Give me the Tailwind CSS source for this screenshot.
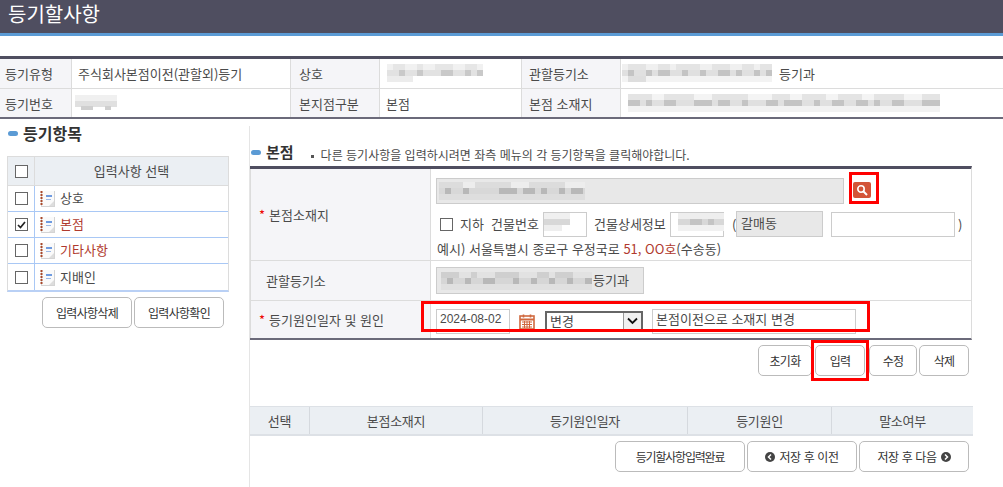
<!DOCTYPE html>
<html lang="ko">
<head>
<meta charset="utf-8">
<script src="https://cdn.jsdelivr.net/npm/@tailwindcss/browser@4"></script>
</head>
<body class="bg-white">
<div class="relative w-[1003px] h-[487px] overflow-hidden bg-white text-[#4a4a4a] text-[13px] leading-none font-['Noto_Sans_CJK_KR','Liberation_Sans',sans-serif]">

  <header class="h-[36px] bg-[#4f4e60] border-b-[3px] border-[#5b9bd5] pl-2 text-white text-[20px] leading-[28px]">등기할사항</header>

  <section class="mt-[20px] border-t-[3px] border-b-2 border-t-[#4f4e60] border-b-[#6b6a7a] grid grid-cols-[72px_219px_89px_142px_99px_1fr] grid-rows-[30px_28px] h-[63px]">
    <div class="bg-[#f5f5f8] border-r border-b border-[#dcdcdc] pl-[5px] flex items-center">등기유형</div>
    <div class="border-b border-r border-[#dcdcdc] pl-[6px] flex items-center">주식회사본점이전(관할외)등기</div>
    <div class="bg-[#f5f5f8] border-r border-b border-[#dcdcdc] pl-[8px] flex items-center">상호</div>
    <div class="border-b border-r border-[#dcdcdc] pl-[7px] flex items-center">
      <svg width="97" height="19"><path d="M0 3H96" stroke="#f1f1f1" stroke-width="6"/><path d="M0 9H96" stroke="#e2e2e2" stroke-width="6"/><path d="M0 15H26" stroke="#ececec" stroke-width="6"/><path d="M12 9H96" stroke="#c9c9c9" stroke-width="6" stroke-dasharray="6 12 6 18 12 12 6 6"/><path d="M6 3H96" stroke="#e6e6e6" stroke-width="6" stroke-dasharray="12 12 6 12 18"/></svg>
    </div>
    <div class="bg-[#f5f5f8] border-r border-b border-[#dcdcdc] pl-[7px] flex items-center">관할등기소</div>
    <div class="border-b border-[#dcdcdc] pl-[1px] flex items-center">
      <svg width="157" height="19"><path d="M0 3H150" stroke="#f0f0f0" stroke-width="6"/><path d="M0 9H150" stroke="#e0e0e0" stroke-width="6"/><path d="M0 15H150" stroke="#f3f3f3" stroke-width="6"/><path d="M6 9H150" stroke="#c4c4c4" stroke-width="6" stroke-dasharray="6 12 6 6 12 12 6 12 6 12 12 6"/><path d="M6 3H150" stroke="#e4e4e4" stroke-width="6" stroke-dasharray="18 12 12 6 24 12"/><path d="M6 15H24" stroke="#dedede" stroke-width="6"/></svg>
      <span>등기과</span>
    </div>
    <div class="bg-[#f5f5f8] border-r border-[#dcdcdc] pl-[5px] flex items-center">등기번호</div>
    <div class="border-r border-[#dcdcdc] pl-[3px] flex items-center">
      <svg width="42" height="16"><path d="M0 3H42" stroke="#f0f0f0" stroke-width="6"/><path d="M0 9H42" stroke="#e0e0e0" stroke-width="6"/><path d="M6 13H36" stroke="#cfcfcf" stroke-width="4" stroke-dasharray="12 12 6"/></svg>
    </div>
    <div class="bg-[#f5f5f8] border-r border-[#dcdcdc] pl-[8px] flex items-center">본지점구분</div>
    <div class="border-r border-[#dcdcdc] pl-[6px] flex items-center">본점</div>
    <div class="bg-[#f5f5f8] border-r border-[#dcdcdc] pl-[7px] flex items-center">본점 소재지</div>
    <div class="pl-[7px] flex items-center">
      <svg width="312" height="19"><path d="M0 3H312" stroke="#f4f4f4" stroke-width="6"/><path d="M0 9H312" stroke="#e0e0e0" stroke-width="6"/><path d="M0 15H312" stroke="#f2f2f2" stroke-width="6"/><path d="M0 9H312" stroke="#c4c4c4" stroke-width="6" stroke-dasharray="12 6 6 12 12 18 18 6 12 12 6 18 12 6 18 12 6 12 12 12"/><path d="M0 3H312" stroke="#e4e4e4" stroke-width="6" stroke-dasharray="24 12 30 18 36 24 18 12 24 12"/></svg>
    </div>
  </section>

  <main class="flex mt-[7px]">
    <aside class="w-[250px] h-[361px] border-r border-[#e5e5e5] pl-[7px] pr-[20px]">
      <h2 class="flex items-center gap-[5px] h-[14px] pl-[1px] text-[16px] font-bold text-[#333]">
        <span class="w-[10px] h-[5px] rounded-full bg-[#5b9bd5]"></span>등기항목
      </h2>
      <div class="mt-[16px] w-[222px] border border-b-2 border-[#dcdcdc] border-b-[#b9d0f5]">
        <div class="flex h-[29px] bg-[#ebeff3] border-b border-[#dcdcdc]">
          <div class="w-[27px] border-r border-[#dcdcdc] flex items-center justify-center"><span class="block size-[13px] border-[1.5px] border-[#666] bg-white"></span></div>
          <div class="flex-1 flex items-center justify-center pb-[2px]">입력사항 선택</div>
        </div>
        <div class="flex h-[26px] border-b border-[#a9c8f5]">
          <div class="w-[27px] border-r border-[#a9c8f5] flex items-center justify-center"><span class="block size-[13px] border-[1.5px] border-[#666] bg-white"></span></div>
          <div class="flex-1 flex items-center gap-[5px] pl-[5px]">
            <svg width="15" height="17" viewBox="0 0 15 17"><rect x="1" y="1" width="14" height="16" fill="#d4d4d4"/><rect x="2" y="1" width="12" height="15" fill="#fafafa"/><path d="M14 11L9 16H14Z" fill="#ddd"/><path d="M1.5 1V16" stroke="#a8482a" stroke-width="2" stroke-dasharray="2 1"/><path d="M6 6H12" stroke="#6f9be0" stroke-width="2"/><path d="M6 9.5H11" stroke="#9db9e6" stroke-width="1"/></svg>
            <span class="pb-[2px]">상호</span>
          </div>
        </div>
        <div class="flex h-[26px] border-b border-[#a9c8f5]">
          <div class="w-[27px] border-r border-[#a9c8f5] flex items-center justify-center"><span class="flex items-center justify-center size-[13px] border-[1.5px] border-[#666] bg-white"><svg width="9" height="8" viewBox="0 0 9 8"><path d="M1 4L3.5 6.5L8 1" fill="none" stroke="#222" stroke-width="1.7"/></svg></span></div>
          <div class="flex-1 flex items-center gap-[5px] pl-[5px]">
            <svg width="15" height="17" viewBox="0 0 15 17"><rect x="1" y="1" width="14" height="16" fill="#d4d4d4"/><rect x="2" y="1" width="12" height="15" fill="#fafafa"/><path d="M14 11L9 16H14Z" fill="#ddd"/><path d="M1.5 1V16" stroke="#a8482a" stroke-width="2" stroke-dasharray="2 1"/><path d="M6 6H12" stroke="#6f9be0" stroke-width="2"/><path d="M6 9.5H11" stroke="#9db9e6" stroke-width="1"/></svg>
            <span class="pb-[2px] text-[#b03a2e]">본점</span>
          </div>
        </div>
        <div class="flex h-[26px] border-b border-[#a9c8f5]">
          <div class="w-[27px] border-r border-[#a9c8f5] flex items-center justify-center"><span class="block size-[13px] border-[1.5px] border-[#666] bg-white"></span></div>
          <div class="flex-1 flex items-center gap-[5px] pl-[5px]">
            <svg width="15" height="17" viewBox="0 0 15 17"><rect x="1" y="1" width="14" height="16" fill="#d4d4d4"/><rect x="2" y="1" width="12" height="15" fill="#fafafa"/><path d="M14 11L9 16H14Z" fill="#ddd"/><path d="M1.5 1V16" stroke="#a8482a" stroke-width="2" stroke-dasharray="2 1"/><path d="M6 6H12" stroke="#6f9be0" stroke-width="2"/><path d="M6 9.5H11" stroke="#9db9e6" stroke-width="1"/></svg>
            <span class="pb-[2px] text-[#b03a2e]">기타사항</span>
          </div>
        </div>
        <div class="flex h-[26px]">
          <div class="w-[27px] border-r border-[#a9c8f5] flex items-center justify-center"><span class="block size-[13px] border-[1.5px] border-[#666] bg-white"></span></div>
          <div class="flex-1 flex items-center gap-[5px] pl-[5px]">
            <svg width="15" height="17" viewBox="0 0 15 17"><rect x="1" y="1" width="14" height="16" fill="#d4d4d4"/><rect x="2" y="1" width="12" height="15" fill="#fafafa"/><path d="M14 11L9 16H14Z" fill="#ddd"/><path d="M1.5 1V16" stroke="#a8482a" stroke-width="2" stroke-dasharray="2 1"/><path d="M6 6H12" stroke="#6f9be0" stroke-width="2"/><path d="M6 9.5H11" stroke="#9db9e6" stroke-width="1"/></svg>
            <span class="pb-[2px]">지배인</span>
          </div>
        </div>
      </div>
      <div class="mt-[5px] ml-[35px] flex gap-[2px] text-[#333] text-[12px] tracking-[-0.7px]">
        <button class="w-[90px] h-[31px] border border-[#bbb] rounded-[5px] bg-white">입력사항삭제</button>
        <button class="w-[90px] h-[31px] border border-[#bbb] rounded-[5px] bg-white">입력사항확인</button>
      </div>
    </aside>

    <div class="flex-1 min-w-0 pr-[31px]">
      <h2 class="h-[40px] pt-[18px] flex items-start pl-[1px]">
        <span class="mt-[6px] w-[10px] h-[5px] rounded-full bg-[#5b9bd5]"></span>
        <span class="ml-[5px] text-[15px] leading-[16px] font-bold text-[#333]">본점</span>
        <span class="ml-[17px] mt-[11px] size-[3px] bg-[#555]"></span>
        <span class="ml-[7px] mt-[5px] text-[12px]">다른 등기사항을 입력하시려면 좌측 메뉴의 각 등기항목을 클릭해야합니다.</span>
      </h2>
      <div class="border-t-[3px] border-b-2 border-t-[#4f4e60] border-b-[#6b6a7a] border-r border-r-[#dcdcdc]">
        <div class="flex h-[92px] border-b border-[#dcdcdc]">
          <div class="w-[181px] bg-[#f5f5f8] border-x border-[#dcdcdc] pl-[8px] flex items-center"><span class="text-[#e00] mr-[4px]">*</span>본점소재지</div>
          <div class="flex-1 pl-[5px] pt-[9px]">
            <div class="flex items-start">
              <div class="w-[408px] h-[26px] bg-[#e8e8e8] border border-[#ccc] flex items-center pl-[2px]">
                <svg width="146" height="19"><path d="M0 3H146" stroke="#ededed" stroke-width="6"/><path d="M0 9H146" stroke="#d8d8d8" stroke-width="6"/><path d="M0 15H146" stroke="#dedede" stroke-width="6"/><path d="M6 9H146" stroke="#b8b8b8" stroke-width="6" stroke-dasharray="6 12 6 30 18 6 12 6 6 12 6"/><path d="M0 3H146" stroke="#dcdcdc" stroke-width="6" stroke-dasharray="24 12 36 18 36"/></svg>
              </div>
              <div class="ml-[9px] mt-[4px] w-[18px] h-[16px] rounded-[2px] bg-[#d35438] flex items-center justify-center">
                <svg width="12" height="12" viewBox="0 0 12 12"><circle cx="5" cy="5" r="3.2" fill="none" stroke="#fff" stroke-width="1.6"/><path d="M7.5 7.5L11 11" stroke="#fff" stroke-width="2"/></svg>
              </div>
            </div>
            <div class="mt-[7px] flex items-center h-[26px]">
              <span class="ml-[4px] block size-[13px] border-[1.5px] border-[#666] bg-white"></span>
              <span class="ml-[7px] w-[24px] whitespace-nowrap pb-[2px]">지하</span>
              <span class="ml-[7px] w-[48px] whitespace-nowrap pb-[2px]">건물번호</span>
              <div class="ml-[4px] w-[44px] h-[25px] border border-[#ccc] bg-white">
                <svg width="30" height="18"><path d="M0 3H26" stroke="#f0f0f0" stroke-width="6"/><path d="M0 9H26" stroke="#d8d8d8" stroke-width="6"/><path d="M0 15H18" stroke="#eee" stroke-width="6"/></svg>
              </div>
              <span class="ml-[7px] w-[72px] whitespace-nowrap pb-[2px]">건물상세정보</span>
              <div class="ml-[4px] w-[54px] h-[25px] border border-[#ccc] bg-white pl-[7px]">
                <svg width="46" height="18"><path d="M0 3H46" stroke="#eee" stroke-width="6"/><path d="M0 9H46" stroke="#d8d8d8" stroke-width="6"/><path d="M12 9H36" stroke="#c4c4c4" stroke-width="6" stroke-dasharray="12 6 6"/><path d="M0 15H46" stroke="#f1f1f1" stroke-width="6"/></svg>
              </div>
              <span class="ml-[8px] w-[4px]">(</span>
              <div class="w-[87px] h-[26px] bg-[#e8e8e8] border border-[#ccc] pl-[4px] pb-[3px] flex items-center">갈매동</div>
              <div class="ml-[8px] w-[124px] h-[25px] border border-[#ccc] bg-white"></div>
              <span class="ml-[3px]">)</span>
            </div>
            <div class="ml-[1px] mt-[4px] leading-[16px]">예시) 서울특별시 종로구 우정국로 <span class="text-[#b03a2e]">51, OO호</span>(수송동)</div>
          </div>
        </div>
        <div class="flex h-[40px] border-b border-[#dcdcdc]">
          <div class="w-[181px] bg-[#f5f5f8] border-x border-[#dcdcdc] pl-[15px] flex items-center">관할등기소</div>
          <div class="flex-1 pl-[5px] flex items-center">
            <div class="w-[208px] h-[27px] bg-[#e8e8e8] border border-[#ccc] flex items-center pl-[4px] gap-[1px]">
              <svg width="151" height="20"><path d="M0 4H151" stroke="#e2e2e2" stroke-width="6"/><path d="M0 10H151" stroke="#d6d6d6" stroke-width="6"/><path d="M0 16H151" stroke="#e0e0e0" stroke-width="6"/><path d="M6 10H151" stroke="#b8b8b8" stroke-width="6" stroke-dasharray="6 12 6 12 12 18 6 12 6 12"/><path d="M0 4H151" stroke="#cfcfcf" stroke-width="6" stroke-dasharray="18 12 6 18 24"/></svg>
              <span class="pb-[2px]">등기과</span>
            </div>
          </div>
        </div>
        <div class="flex h-[37px]">
          <div class="w-[181px] bg-[#f5f5f8] border-x border-[#dcdcdc] pl-[8px] flex items-center"><span class="text-[#e00] mr-[4px]">*</span>등기원인일자 및 원인</div>
          <div class="flex-1 pl-[5px] pt-[8px] flex items-start">
            <div class="w-[74px] h-[25px] border border-[#ccc] bg-white pl-[3px] pt-[2px] font-['Liberation_Sans',sans-serif] text-[12px] leading-[14px]">2024-08-02</div>
            <svg class="ml-[9px] mt-[5px]" width="16" height="16" viewBox="0 0 16 16"><rect x="1" y="2" width="14" height="13" fill="#fff" stroke="#d0693f" stroke-width="1.6"/><path d="M1 5.5H15" stroke="#d0693f" stroke-width="2"/><path d="M4.5 0.5V3.5M11.5 0.5V3.5" stroke="#d0693f" stroke-width="1.6"/><path d="M3 8H13M3 10.5H13M3 13H13M5.5 7V14M8 7V14M10.5 7V14" stroke="#d0693f" stroke-width="1"/></svg>
            <div class="ml-[10px] mt-[2px] w-[98px] h-[20px] border-2 border-[#666] bg-white flex">
              <span class="flex-1 pl-[3px] pt-[1px]">변경</span>
              <span class="w-[18px] h-[16px] border-l border-[#999] bg-[#f0f0f0] flex items-center justify-center"><svg width="11" height="8" viewBox="0 0 11 8"><path d="M1 1.5L5.5 6L10 1.5" fill="none" stroke="#111" stroke-width="1.8"/></svg></span>
            </div>
            <div class="ml-[9px] w-[204px] h-[25px] border border-[#ccc] bg-white pl-[3px] pt-[2px] leading-[14px]">본점이전으로 소재지 변경</div>
          </div>
        </div>
      </div>
      <div class="mt-[5px] h-[31px] flex justify-end pr-[3px] text-[#333] text-[12px] tracking-[-0.7px]">
        <button class="w-[54px] h-[31px] border border-[#bbb] rounded-[5px] bg-white">초기화</button>
        <button class="w-[50px] ml-[3px] h-[31px] border border-[#bbb] rounded-[5px] bg-white">입력</button>
        <button class="w-[48px] ml-[4px] h-[31px] border border-[#bbb] rounded-[5px] bg-white">수정</button>
        <button class="w-[50px] ml-[2px] h-[31px] border border-[#bbb] rounded-[5px] bg-white">삭제</button>
      </div>
      <div class="mt-[30px] grid grid-cols-[60px_173px_205px_144px_141px] h-[30px] bg-[#ebeff3] border-t border-b-2 border-[#dde1e6] text-center w-[723px] tracking-[-0.3px]">
        <div class="border-r border-[#d5d9de] flex items-center justify-center">선택</div>
        <div class="border-r border-[#d5d9de] flex items-center justify-center">본점소재지</div>
        <div class="border-r border-[#d5d9de] flex items-center justify-center">등기원인일자</div>
        <div class="border-r border-[#d5d9de] flex items-center justify-center">등기원인</div>
        <div class="flex items-center justify-center">말소여부</div>
      </div>
      <div class="mt-[5px] flex justify-end gap-[2px] pr-[3px] text-[#333] text-[12px] tracking-[-0.4px]">
        <button class="w-[130px] h-[31px] border border-[#bbb] rounded-[5px] bg-white tracking-[-1.2px]">등기할사항입력완료</button>
        <button class="w-[110px] h-[31px] border border-[#bbb] rounded-[5px] bg-white flex items-center justify-center gap-[4px]">
          <svg width="10" height="10" viewBox="0 0 10 10"><circle cx="5" cy="5" r="5" fill="#444"/><path d="M6 2.5L3.5 5L6 7.5" fill="none" stroke="#fff" stroke-width="1.5"/></svg>저장 후 이전</button>
        <button class="w-[110px] h-[31px] border border-[#bbb] rounded-[5px] bg-white flex items-center justify-center gap-[4px]">저장 후 다음
          <svg width="10" height="10" viewBox="0 0 10 10"><circle cx="5" cy="5" r="5" fill="#444"/><path d="M4 2.5L6.5 5L4 7.5" fill="none" stroke="#fff" stroke-width="1.5"/></svg></button>
      </div>
    </div>
  </main>

  <!-- red annotation boxes over the form -->
  <div class="absolute left-[849px] top-[172px] w-[30px] h-[32px] border-[3px] border-[#f00]"></div>
  <div class="absolute left-[421px] top-[301px] w-[449px] h-[31px] border-[3px] border-[#f00]"></div>
  <div class="absolute left-[811px] top-[340px] w-[58px] h-[41px] border-[3px] border-[#f00]"></div>
</div>
</body>
</html>
